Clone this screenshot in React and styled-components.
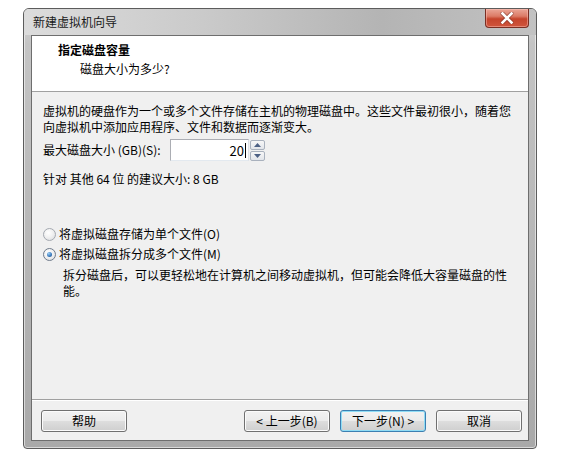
import React from "react";
import styled, { createGlobalStyle } from "styled-components";

const GlobalStyle = createGlobalStyle`
  html, body {
    margin: 0;
    padding: 0;
    background: #ffffff;
  }
  body {
    font-family: "Noto Sans CJK SC", "Liberation Sans", sans-serif;
    font-size: 12px;
    color: #000000;
  }
`;

const Page = styled.div`
  padding: 8px 28px 0 23px;
`;

const Window = styled.div`
  box-sizing: border-box;
  width: 514px;
  height: 441px;
  display: flex;
  flex-direction: column;
  border: 1px solid #5c5c5c;
  border-radius: 6px 6px 4px 4px;
  padding: 0 7px 7px 7px;
  background: linear-gradient(to bottom, #d6d6d6 0%, #c4c4c4 8%, #a9a9a9 100%);
  box-shadow: inset 0 0 0 1px rgba(255, 255, 255, 0.55);
`;

const TitleBar = styled.div`
  height: 26px;
  display: flex;
  justify-content: space-between;
  align-items: flex-start;
  margin: 0 -7px;
  padding: 0 7px 0 9px;
  background: linear-gradient(to right, #dcdcdc 0%, #cacaca 35%, #b4b4b4 70%, #c2c2c2 100%);
  border-radius: 5px 5px 0 0;
`;

const Title = styled.span`
  padding-top: 5px;
  line-height: 16px;
  font-size: 12px;
  color: #1a1a1a;
`;

const CloseButton = styled.div`
  width: 44px;
  height: 19px;
  display: flex;
  align-items: center;
  justify-content: center;
  box-sizing: border-box;
  border: 1px solid #7a2e22;
  border-top: none;
  border-radius: 0 0 4px 4px;
  background: linear-gradient(to bottom, #eaa697 0%, #dc7b66 40%, #c5442c 55%, #d0553c 100%);
  box-shadow: inset 0 0 0 1px rgba(255, 200, 190, 0.45);
`;

const Client = styled.div`
  flex: 1;
  display: flex;
  flex-direction: column;
  border: 1px solid #6e6e6e;
  background: #f0f0f0;
`;

const Header = styled.div`
  height: 56px;
  box-sizing: border-box;
  padding: 6px 0 0 26px;
  background: #ffffff;
  border-bottom: 1px solid #a0a0a0;
`;

const HeaderTitle = styled.div`
  font-weight: bold;
  line-height: 16px;
`;

const HeaderSubtitle = styled.div`
  margin-top: 3px;
  padding-left: 22px;
  line-height: 16px;
`;

const Body = styled.div`
  flex: 1;
  padding: 11px 11px 0 11px;
`;

const Paragraph = styled.p`
  margin: 0;
  line-height: 16px;
`;

const SizeRow = styled.div`
  display: flex;
  align-items: center;
  margin-top: 4px;
`;

const Label = styled.span`
  width: 127px;
  line-height: 16px;
`;

const SpinBox = styled.div`
  display: flex;
  height: 22px;
`;

const NumberField = styled.div`
  box-sizing: border-box;
  width: 79px;
  height: 22px;
  display: flex;
  align-items: center;
  justify-content: flex-end;
  padding-right: 2px;
  border: 1px solid #abadb3;
  border-right-color: #dbdfe6;
  border-bottom-color: #e3e9ef;
  background: #ffffff;
  font-size: 13px;
`;

const Caret = styled.span`
  width: 1px;
  height: 15px;
  margin-left: 1px;
  background: #000000;
`;

const SpinButtons = styled.div`
  display: flex;
  flex-direction: column;
  justify-content: center;
  gap: 1px;
  margin-left: 1px;
`;

const SpinButton = styled.div`
  box-sizing: border-box;
  width: 15px;
  height: 10px;
  display: flex;
  align-items: center;
  justify-content: center;
  border: 1px solid #a9b1bd;
  border-radius: 2px;
  background: linear-gradient(to bottom, #f7f7f7, #e2e5ea);
`;

const Hint = styled.div`
  margin-top: 10px;
  line-height: 16px;
`;

const Options = styled.div`
  margin-top: 39px;
  display: flex;
  flex-direction: column;
  gap: 4px;
`;

const RadioRow = styled.label`
  display: flex;
  align-items: center;
  gap: 3px;
  line-height: 16px;
`;

const RadioCircle = styled.span`
  box-sizing: border-box;
  width: 13px;
  height: 13px;
  display: flex;
  align-items: center;
  justify-content: center;
  border-radius: 50%;
  border: 1px solid ${(p) => (p.$checked ? "#6f7b8b" : "#a4a9b0")};
  background: radial-gradient(circle at 40% 35%, #ffffff 0%, #f1f1f1 45%, #d6d9dd 100%);
`;

const RadioDot = styled.span`
  width: 5px;
  height: 5px;
  border-radius: 50%;
  background: radial-gradient(circle at 35% 30%, #9fd0f5 0%, #3f7fc0 55%, #1c4a85 100%);
`;

const Description = styled.p`
  margin: 5px 0 0 20px;
  line-height: 16px;
`;

const Footer = styled.div`
  display: flex;
  align-items: center;
  padding: 10px 6px 8px 9px;
  border-top: 1px solid #a0a0a0;
  box-shadow: inset 0 1px 0 #ffffff;
`;

const Spacer = styled.div`
  flex: 1;
`;

const Button = styled.div`
  box-sizing: border-box;
  width: 86px;
  height: 22px;
  margin-left: ${(p) => p.$gap || 0}px;
  display: flex;
  align-items: center;
  justify-content: center;
  border: 1px solid ${(p) => (p.$default ? "#3c7fb1" : "#707070")};
  border-radius: 3px;
  background: linear-gradient(to bottom, #f2f2f2 0%, #ebebeb 48%, #dddddd 52%, #cfcfcf 100%);
  box-shadow: inset 0 0 0 1px ${(p) => (p.$default ? "#8fdcf5" : "#fbfbfb")};
  font-size: 12px;
  line-height: 16px;
`;

function CloseGlyph() {
  return (
    <svg width="14" height="12" viewBox="0 0 14 12">
      <path
        d="M2.5 1.5 L11.5 10.5 M11.5 1.5 L2.5 10.5"
        stroke="#6b2a20"
        strokeWidth="4.2"
        strokeLinecap="round"
        opacity="0.55"
      />
      <path
        d="M2.5 1.5 L11.5 10.5 M11.5 1.5 L2.5 10.5"
        stroke="#ffffff"
        strokeWidth="2.6"
        strokeLinecap="square"
      />
    </svg>
  );
}

function Arrow({ up }) {
  return (
    <svg width="7" height="4" viewBox="0 0 7 4">
      <path d={up ? "M0 4 L3.5 0 L7 4 Z" : "M0 0 L3.5 4 L7 0 Z"} fill="#4d6185" />
    </svg>
  );
}

function Radio({ checked, children }) {
  return (
    <RadioRow>
      <RadioCircle $checked={checked}>{checked && <RadioDot />}</RadioCircle>
      <span>{children}</span>
    </RadioRow>
  );
}

export default function App() {
  return (
    <>
      <GlobalStyle />
      <Page>
        <Window>
          <TitleBar>
            <Title>新建虚拟机向导</Title>
            <CloseButton>
              <CloseGlyph />
            </CloseButton>
          </TitleBar>
          <Client>
            <Header>
              <HeaderTitle>指定磁盘容量</HeaderTitle>
              <HeaderSubtitle>磁盘大小为多少?</HeaderSubtitle>
            </Header>
            <Body>
              <Paragraph>
                虚拟机的硬盘作为一个或多个文件存储在主机的物理磁盘中。这些文件最初很小，随着您
                <br />
                向虚拟机中添加应用程序、文件和数据而逐渐变大。
              </Paragraph>
              <SizeRow>
                <Label>最大磁盘大小 (GB)(S):</Label>
                <SpinBox>
                  <NumberField>
                    20
                    <Caret />
                  </NumberField>
                  <SpinButtons>
                    <SpinButton>
                      <Arrow up />
                    </SpinButton>
                    <SpinButton>
                      <Arrow />
                    </SpinButton>
                  </SpinButtons>
                </SpinBox>
              </SizeRow>
              <Hint>针对 其他 64 位 的建议大小: 8 GB</Hint>
              <Options>
                <Radio>将虚拟磁盘存储为单个文件(O)</Radio>
                <Radio checked>将虚拟磁盘拆分成多个文件(M)</Radio>
              </Options>
              <Description>
                拆分磁盘后，可以更轻松地在计算机之间移动虚拟机，但可能会降低大容量磁盘的性
                <br />
                能。
              </Description>
            </Body>
            <Footer>
              <Button>帮助</Button>
              <Spacer />
              <Button>&lt; 上一步(B)</Button>
              <Button $default $gap={10}>
                下一步(N) &gt;
              </Button>
              <Button $gap={10}>取消</Button>
            </Footer>
          </Client>
        </Window>
      </Page>
    </>
  );
}
